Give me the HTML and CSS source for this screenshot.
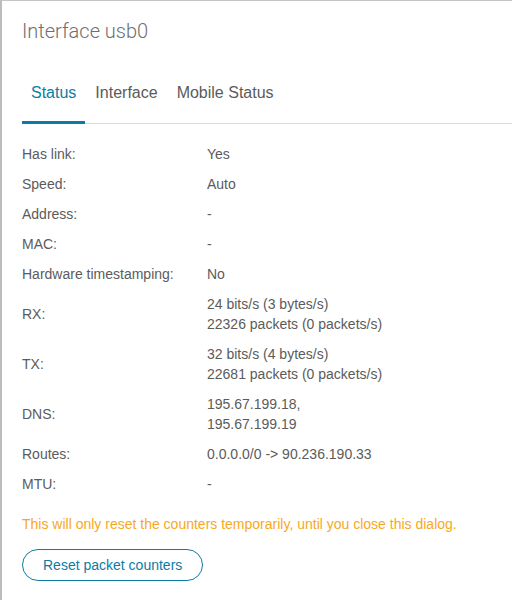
FILE: index.html
```html
<!DOCTYPE html>
<html lang="en">

<head>
    <meta charset="UTF-8">
    <meta name="viewport" content="width=device-width, initial-scale=1.0">
    <title>Interface usb0</title>
    <link rel="stylesheet" href="styles.css">
</head>

<body>
    <div class="dialog">
        <h2 class="dialog-title">Interface usb0</h2>

        <div class="tabs">
            <span class="tab active">Status</span>
            <span class="tab">Interface</span>
            <span class="tab">Mobile Status</span>
        </div>

        <div class="status-list">
            <div class="label">Has link:</div>
            <div class="value">Yes</div>

            <div class="label">Speed:</div>
            <div class="value">Auto</div>

            <div class="label">Address:</div>
            <div class="value">-</div>

            <div class="label">MAC:</div>
            <div class="value">-</div>

            <div class="label">Hardware timestamping:</div>
            <div class="value">No</div>

            <div class="label">RX:</div>
            <div class="value">24 bits/s (3 bytes/s)<br>22326 packets (0 packets/s)</div>

            <div class="label">TX:</div>
            <div class="value">32 bits/s (4 bytes/s)<br>22681 packets (0 packets/s)</div>

            <div class="label">DNS:</div>
            <div class="value">195.67.199.18,<br>195.67.199.19</div>

            <div class="label">Routes:</div>
            <div class="value">0.0.0.0/0 -&gt; 90.236.190.33</div>

            <div class="label">MTU:</div>
            <div class="value">-</div>
        </div>

        <p class="warning">This will only reset the counters temporarily, until you close this dialog.</p>

        <button type="button" class="btn-outline">Reset packet counters</button>
    </div>
</body>

</html>
```

FILE: styles.css
```css
body {
    font-family: "Liberation Sans", Arial, sans-serif;
    margin: 0;
    padding: 0;
    background-color: #fff;
    color: #5b5b5b;
    font-size: 14px;
}

.dialog {
    height: 600px;
    box-sizing: border-box;
    border-left: 2px solid #bcbcbc;
    border-top: 1px solid #c4c4c4;
    padding: 0 0 0 20px;
}

.dialog-title {
    font-family: Roboto, "Liberation Sans", sans-serif;
    font-weight: 300;
    font-size: 20px;
    line-height: 24px;
    color: #6f6f6f;
    margin: 0;
    padding-top: 18px;
}

.tabs {
    display: flex;
    margin-top: 30px;
    border-bottom: 1px solid #dcdcdc;
}

.tab {
    font-size: 16px;
    line-height: 20px;
    padding: 10px 9px 18px;
    margin-right: 1px;
    margin-bottom: -1px;
    border-bottom: 3px solid transparent;
    color: #5b5b5b;
    cursor: pointer;
}

.tab.active {
    color: #0b7ca6;
    border-bottom-color: #0b7ca6;
}

.status-list {
    display: grid;
    grid-template-columns: 185px 1fr;
    align-items: center;
    margin-top: 15px;
    line-height: 20px;
}

.status-list .label,
.status-list .value {
    padding: 5px 0;
}

.warning {
    color: #f7a823;
    line-height: 20px;
    margin: 15px 0;
}

.btn-outline {
    font-family: "Liberation Sans", Arial, sans-serif;
    font-size: 14px;
    height: 32px;
    padding: 0 20px;
    background-color: #fff;
    color: #0b7ca6;
    border: 1px solid #0b7ca6;
    border-radius: 16px;
    cursor: pointer;
}
```
